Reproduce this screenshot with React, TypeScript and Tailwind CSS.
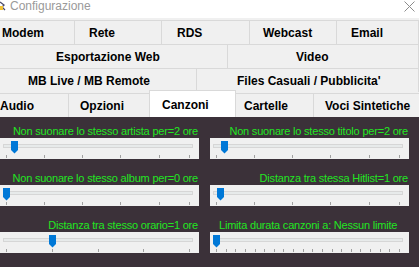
import React from "react";

type Tab = { label: string; cls: string };

const rows: Tab[][] = [
  [
    { label: "Modem", cls: "w-[75px] pl-[2px]" },
    { label: "Rete", cls: "w-[87px] pl-[14px]" },
    { label: "RDS", cls: "w-[88px] pl-[15px]" },
    { label: "Webcast", cls: "w-[87px] pl-[13px]" },
    { label: "Email", cls: "flex-1 pl-[14px]" },
  ],
  [
    { label: "Esportazione Web", cls: "w-[228px] pl-[56px]" },
    { label: "Video", cls: "flex-1 pl-[68px]" },
  ],
  [
    { label: "MB Live / MB Remote", cls: "w-[197px] pl-[28px]" },
    { label: "Files Casuali / Pubblicita'", cls: "flex-1 pl-[40px]" },
  ],
];

interface SliderDef {
  label: string;
  align: "right" | "left";
  max: number;
  ticks: number[];
  value: number;
}

const range = (n: number) => Array.from({ length: n }, (_, i) => i);

const leftSliders: SliderDef[] = [
  { label: "Non suonare lo stesso artista per=2 ore", align: "right", max: 24, ticks: [0, 5, 10, 15, 20, 24], value: 1 },
  { label: "Non suonare lo stesso album per=0 ore", align: "right", max: 24, ticks: [0, 5, 10, 15, 20, 24], value: 0 },
  { label: "Distanza tra stesso orario=1 ore", align: "right", max: 4, ticks: [0, 1, 2, 3, 4], value: 1 },
];

const rightSliders: SliderDef[] = [
  { label: "Non suonare lo stesso titolo per=2 ore", align: "right", max: 24, ticks: [0, 5, 10, 15, 20, 24], value: 1 },
  { label: "Distanza tra stessa Hitlist=1 ore", align: "right", max: 48, ticks: [0, 10, 20, 30, 40, 48], value: 1 },
  { label: "Limita durata canzoni a: Nessun limite", align: "left", max: 19, ticks: range(20), value: 0 },
];

// track usable span inside the 199px control
const pos = (v: number, max: number) => 6.5 + (v * 183) / max;

const Slider = ({ s }: { s: SliderDef }) => (
  <div className="flex flex-col">
    <div
      className={
        s.align === "right"
          ? "h-[14px] pr-[1px] text-right text-[11px] leading-[14px] tracking-[-0.2px] text-[#22e622] whitespace-nowrap"
          : "h-[14px] pl-[9px] text-left text-[11px] leading-[14px] tracking-[-0.2px] text-[#22e622] whitespace-nowrap"
      }
    >
      {s.label}
    </div>
    <div className="relative h-[21px] bg-[#f0f0f0]">
      <div className="absolute left-[3px] right-[6px] top-[6px] h-[4px] border border-[#d6d6d6] bg-[#e7eaea]" />
      {s.ticks.map((t) => (
        <div
          key={t}
          className="absolute top-[17px] h-[3px] w-px bg-[#a0a0a0]"
          style={{ left: Math.floor(pos(t, s.max)) }}
        />
      ))}
      <svg
        className="absolute top-[3px]"
        width="7"
        height="13"
        viewBox="0 0 7 13"
        style={{ left: Math.round(pos(s.value, s.max) - 3.5) }}
      >
        <polygon points="0,0 7,0 7,9 3.5,12.5 0,9" fill="#0078d7" />
      </svg>
    </div>
  </div>
);

const App = () => {
  return (
    <div
      className="flex h-[267px] w-[419px] flex-col overflow-hidden bg-[#f0f0f0]"
      style={{ fontFamily: '"Liberation Sans", Arial, sans-serif' }}
    >
      {/* title bar */}
      <div className="relative flex h-[18px] shrink-0 items-start bg-white">
        <svg width="6" height="11" viewBox="0 0 6 11" className="mt-[1px]">
          <path d="M0 1 L4 4 L2 6 L5 9" stroke="#4a4a6a" strokeWidth="1.3" fill="none" />
          <rect x="0" y="5" width="3" height="4" fill="#f2c233" />
        </svg>
        <span className="ml-[4px] text-[12px] leading-[12px] text-[#9a9a9a]">Configurazione</span>
        <svg className="absolute right-[4px] top-[1px]" width="11" height="11" viewBox="0 0 11 11">
          <path d="M0.5 0.5 L10.5 10.5 M10.5 0.5 L0.5 10.5" stroke="#8c8c8c" strokeWidth="1" />
        </svg>
      </div>
      <div className="h-[2px] shrink-0" />

      {/* tab rows */}
      <div className="shrink-0 text-[12px] font-bold text-black">
        {rows.map((row, i) => (
          <div key={i} className="flex h-[24px]">
            {row.map((tab) => (
              <div
                key={tab.label}
                className={`flex h-[24px] items-center overflow-hidden whitespace-nowrap border-r border-t border-[#d9d9d9] ${tab.cls}`}
              >
                {tab.label}
              </div>
            ))}
          </div>
        ))}
        <div className="flex h-[25px]">
          <div className="mt-[1px] flex h-[24px] w-[69px] items-center border-r border-t border-[#d9d9d9] pl-0">
            Audio
          </div>
          <div className="mt-[1px] flex h-[24px] w-[80px] items-center border-t border-[#d9d9d9] pl-[11px]">
            Opzioni
          </div>
          <div className="relative z-10 -mt-[2px] flex h-[27px] w-[87px] items-start border-l border-r border-t border-[#d9d9d9] bg-white pl-[12px] pt-[5px]">
            Canzoni
          </div>
          <div className="mt-[1px] flex h-[24px] w-[78px] items-center border-r border-t border-[#d9d9d9] pl-[8px]">
            Cartelle
          </div>
          <div className="mt-[1px] flex h-[24px] flex-1 items-center whitespace-nowrap border-t border-[#d9d9d9] pl-[11px]">
            Voci Sintetiche
          </div>
        </div>
      </div>

      {/* Canzoni page */}
      <div className="flex flex-1 gap-[11px] bg-[#3b3139] pt-[7px]">
        <div className="flex w-[199px] flex-col gap-[12px]">
          {leftSliders.map((s) => (
            <Slider key={s.label} s={s} />
          ))}
          <div className="h-[14px] pl-[42px] text-[11px] leading-[14px] text-[#22e622]">Canzoni</div>
        </div>
        <div className="flex w-[199px] flex-col gap-[12px]">
          {rightSliders.map((s) => (
            <Slider key={s.label} s={s} />
          ))}
        </div>
      </div>
    </div>
  );
};

export default App;
